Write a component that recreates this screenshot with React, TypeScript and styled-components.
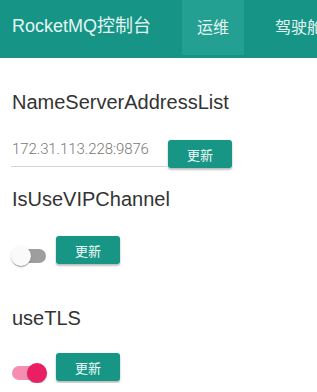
import React, { useState } from 'react';
import styled, { createGlobalStyle } from 'styled-components';

const GlobalStyle = createGlobalStyle`
    html, body {
        margin: 0;
        padding: 0;
        background: #fff;
        font-family: "Liberation Sans", Arial, "Noto Sans CJK SC", sans-serif;
    }
`;

const Header = styled.header`
    height: 58px;
    background: #169486;
    display: flex;
    align-items: flex-start;
    overflow: hidden;
    white-space: nowrap;
`;

const Brand = styled.div`
    padding-left: 12px;
    line-height: 52px;
    font-size: 18px;
    color: #e4f5f3;
`;

const Nav = styled.nav`
    display: flex;
    gap: 16px;
    margin-left: 31px;
`;

const NavTab = styled.div<{ active?: boolean }>`
    height: 55px;
    padding: 0 15px;
    line-height: 52px;
    font-size: 16px;
    color: #e4f5f3;
    font-family: "Noto Sans CJK SC", sans-serif;
    background: ${({ active }) => (active ? '#24a092' : 'transparent')};
`;

const Main = styled.main`
    padding: 0 12px;
`;

const Label = styled.div<{ top: number }>`
    margin-top: ${({ top }) => top}px;
    font-size: 20px;
    line-height: 24px;
    color: #333;
`;

const Row = styled.div<{ top: number }>`
    display: flex;
    align-items: flex-start;
    margin-top: ${({ top }) => top}px;
`;

const AddressInput = styled.input`
    box-sizing: border-box;
    width: 156px;
    height: 27px;
    margin: 0 0 0 -1px;
    padding: 0 0 8px 1px;
    border: none;
    border-bottom: 1px solid #d4d4d4;
    outline: none;
    font-family: Roboto, sans-serif;
    font-weight: 300;
    font-size: 15px;
    letter-spacing: -0.1px;
    color: #777;
    background: transparent;
`;

const UpdateButton = styled.button<{ gap: number }>`
    width: 64px;
    height: 28px;
    margin-left: ${({ gap }) => gap}px;
    border: none;
    border-radius: 3px;
    background: #179686;
    color: #f2fbfa;
    font-family: "Noto Sans CJK SC", sans-serif;
    font-size: 13px;
    box-shadow: 0 2px 2px rgba(0, 0, 0, 0.24), 0 0 2px rgba(0, 0, 0, 0.12);
    cursor: pointer;
`;

const SwitchBox = styled.div`
    position: relative;
    width: 36px;
    height: 20px;
    margin-top: 10px;
    cursor: pointer;
`;

const Track = styled.div<{ on: boolean }>`
    position: absolute;
    left: 0;
    top: 3px;
    width: 34px;
    height: 14px;
    border-radius: 7px;
    background: ${({ on }) => (on ? '#f48fb1' : '#9e9e9e')};
`;

const Knob = styled.div<{ on: boolean }>`
    position: absolute;
    top: 0;
    left: ${({ on }) => (on ? '15px' : '-1px')};
    width: 20px;
    height: 20px;
    border-radius: 50%;
    background: ${({ on }) => (on ? '#e91e63' : '#fafafa')};
    box-shadow: 0 2px 1px -1px rgba(0, 0, 0, 0.2), 0 1px 1px rgba(0, 0, 0, 0.14), 0 1px 3px rgba(0, 0, 0, 0.12);
`;

const Toggle: React.FC<{ initial: boolean }> = ({ initial }) => {
    const [on, setOn] = useState(initial);
    return (
        <SwitchBox onClick={() => setOn(!on)}>
            <Track on={on} />
            <Knob on={on} />
        </SwitchBox>
    );
};

const App: React.FC = () => {
    return (
        <>
            <GlobalStyle />
            <Header>
                <Brand>RocketMQ控制台</Brand>
                <Nav>
                    <NavTab active>运维</NavTab>
                    <NavTab>驾驶舱</NavTab>
                </Nav>
            </Header>
            <Main>
                <Label top={32}>NameServerAddressList</Label>
                <Row top={26}>
                    <AddressInput defaultValue="172.31.113.228:9876" />
                    <UpdateButton gap={1}>更新</UpdateButton>
                </Row>
                <Label top={19}>IsUseVIPChannel</Label>
                <Row top={25}>
                    <Toggle initial={false} />
                    <UpdateButton gap={8}>更新</UpdateButton>
                </Row>
                <Label top={40}>useTLS</Label>
                <Row top={23}>
                    <Toggle initial={true} />
                    <UpdateButton gap={8}>更新</UpdateButton>
                </Row>
            </Main>
        </>
    );
};

export default App;
